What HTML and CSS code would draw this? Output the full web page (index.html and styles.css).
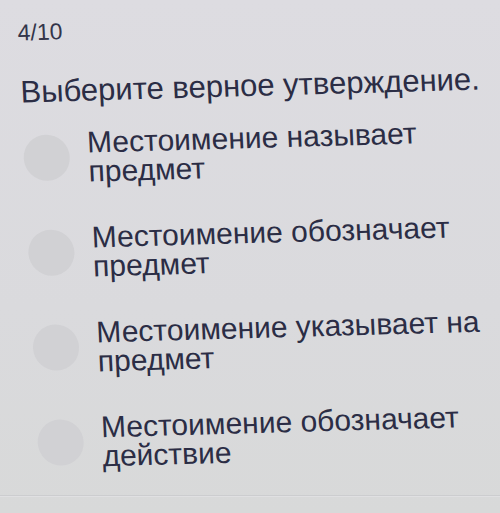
FILE: index.html
```html
<!DOCTYPE html>
<html lang="ru">
<head>
<meta charset="utf-8">
<link rel="stylesheet" href="styles.css">
</head>
<body>
<main class="quiz">
  <div class="counter">4/10</div>
  <h1 class="question">Выберите верное утверждение.</h1>
  <ul class="options">
    <li class="option"><span class="radio"></span><span class="label">Местоимение называет<br>предмет</span></li>
    <li class="option"><span class="radio"></span><span class="label">Местоимение обозначает<br>предмет</span></li>
    <li class="option"><span class="radio"></span><span class="label">Местоимение указывает на<br>предмет</span></li>
    <li class="option"><span class="radio"></span><span class="label">Местоимение обозначает<br>действие</span></li>
  </ul>
</main>
<div class="footer-rule"></div>
</body>
</html>
```
FILE: styles.css
```css
html, body {
  margin: 0;
  height: 100%;
}

body {
  background: linear-gradient(180deg, #dddce1 0%, #dadadd 60%, #d8d9d9 100%);
  font-family: "Liberation Sans", Arial, sans-serif;
  color: #2b2d45;
  overflow: hidden;
}

/* the screen is seen at a slight angle */
.quiz {
  padding: 20px 0 0 16px;
  height: 473px;
  box-sizing: border-box;
  transform-origin: 0 0;
  transform: rotate(-1.6deg) skewX(1.2deg);
}

.counter {
  font-size: 23px;
  line-height: 26px;
  color: #33354a;
}

.question {
  margin: 30px 0 0 0;
  font-size: 31px;
  font-weight: 400;
  line-height: 34px;
  white-space: nowrap;
}

.options {
  list-style: none;
  margin: 20px 0 0 0;
  padding: 0;
}

.option {
  display: flex;
  align-items: center;
  gap: 18px;
  font-size: 30px;
  line-height: 29px;
  white-space: nowrap;
}

.option + .option {
  margin-top: 37px;
}

.radio {
  flex: none;
  width: 46px;
  height: 46px;
  border-radius: 50%;
  background: #d1d1d4;
}

.footer-rule {
  margin-top: 22px;
  height: 1px;
  background: #cccdcf;
  box-shadow: 0 1px 0 #e0e0e2;
}
```
